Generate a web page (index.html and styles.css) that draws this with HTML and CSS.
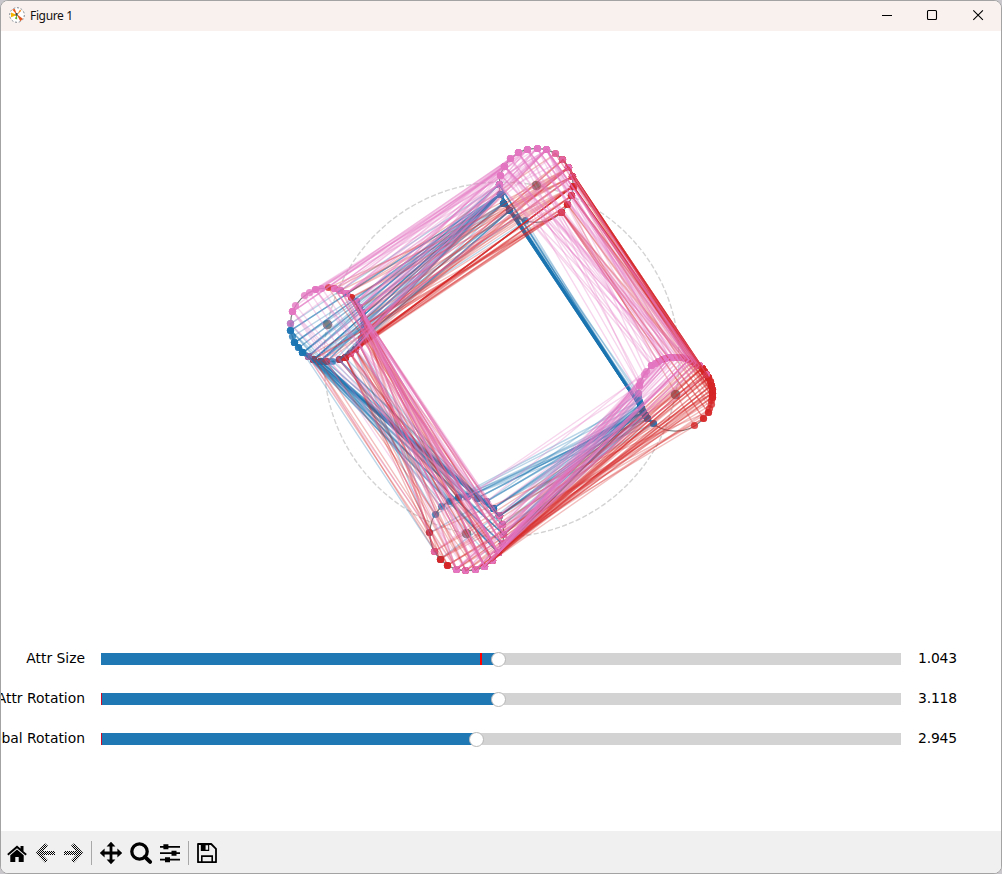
FILE: index.html
```html
<!DOCTYPE html>
<html lang="en">
<head>
<meta charset="utf-8">
<title>Figure 1</title>
<link rel="stylesheet" href="styles.css">
</head>
<body>
<div class="window">
  <header class="titlebar">
    <svg class="app-icon" width="16" height="16" viewBox="0 0 16 16">
      <circle cx="8" cy="8" r="7.3" fill="#fff" stroke="#7d8790" stroke-width="1" stroke-dasharray="2 1.8"/>
      <path d="M8 8 2 5.6v4.6z" fill="#f5b400"/>
      <path d="M8 8 3.2 2.6 5.9 1.9z" fill="#e8591c"/>
      <path d="M7.5 7l6.4 4.8-2.6 2.4z" fill="#e2571e"/>
      <path d="M8 8l3-5.5 1.3 1.2z" fill="#f08a24"/>
      <path d="M8 8l-2.2 3.6 2.4 1z" fill="#63b32e"/>
      <path d="M6.6 6h2v2.8h-2z" fill="#30444c"/>
    </svg>
    <span class="title">Figure 1</span>
    <div class="controls">
      <svg width="12" height="12" viewBox="0 0 12 12"><path d="M1 6.5h10"/></svg>
      <svg width="12" height="12" viewBox="0 0 12 12"><rect x="1.5" y="1.5" width="9" height="9" rx="1"/></svg>
      <svg width="12" height="12" viewBox="0 0 12 12"><path d="M1.3 1.3l9.6 9.6M10.9 1.3 1.3 10.9"/></svg>
    </div>
  </header>
  <main class="canvas">
    <svg class="plot" id="plot" width="1000" height="608" viewBox="1 31 1000 608"></svg>
    <section class="sliders">
      <div class="label">Attr Size</div>
      <div class="track"><i class="fill size"></i><i class="init at-size"></i><b class="handle size-pos"></b></div>
      <div class="value">1.043</div>
      <div class="label">Attr Rotation</div>
      <div class="track"><i class="fill attr"></i><i class="init"></i><b class="handle attr-pos"></b></div>
      <div class="value">3.118</div>
      <div class="label">Global Rotation</div>
      <div class="track"><i class="fill global"></i><i class="init"></i><b class="handle global-pos"></b></div>
      <div class="value">2.945</div>
    </section>
  </main>
  <footer class="toolbar">
    <svg class="tool home" width="22" height="24" viewBox="0 0 22 24">
      <path d="M1.2 13 11 4.6l3.5 3V5h3v5.2l3.3 2.8-1.2 1.5L11 7.2l-8.6 7.3z"/>
      <path d="M4.3 14.2 11 8.5l6.7 5.7v6.9h-5v-5.2H9.3v5.2h-5z"/>
    </svg>
    <svg class="tool back" width="22" height="24" viewBox="0 0 22 24">
      <defs><pattern id="dither" width="2" height="2" patternUnits="userSpaceOnUse"><path d="M0 0h1v1H0zM1 1h1v1H1z" fill="#000" shape-rendering="crispEdges"/></pattern></defs>
      <path class="arrow" d="M11.5 3.5 3.5 12l8 8.5M4 12h16"/>
    </svg>
    <svg class="tool forward" width="22" height="24" viewBox="0 0 22 24">
      <path class="arrow" d="M9.5 3.5l8 8.5-8 8.5M17 12H1"/>
    </svg>
    <span class="divider"></span>
    <svg class="tool pan" width="24" height="24" viewBox="0 0 24 24">
      <path d="M12 .8l4.4 4.8h-3v5h5v-3l4.8 4.4-4.8 4.4v-3h-5v5h3L12 23.2l-4.4-4.8h3v-5h-5v3L.8 12l4.8-4.4v3h5v-5h-3z"/>
    </svg>
    <svg class="tool zoom" width="24" height="24" viewBox="0 0 24 24">
      <circle cx="10.5" cy="10.5" r="7.7" fill="none" stroke="#000" stroke-width="3.3"/>
      <path d="M15.9 15.9l5.2 5" fill="none" stroke="#000" stroke-width="4" stroke-linecap="round"/>
    </svg>
    <svg class="tool config" width="22" height="24" viewBox="0 0 22 24">
      <path d="M1 5h20v1.7H1zM1 11.3h20V13H1zM1 17.8h20v1.7H1zM4.4 3.2h5v5h-5zM12.5 9.7h5v5h-5zM6 16.2h5v5H6z"/>
    </svg>
    <span class="divider second"></span>
    <svg class="tool save" width="22" height="24" viewBox="0 0 22 24">
      <path d="M2 3h13.2L20 7.8v13.4H2z" fill="none" stroke="#000" stroke-width="1.8" stroke-linejoin="round"/>
      <path d="M4.8 3h8.4v7H4.8zM5 21v-6.8h12V21h-1.6v-5.1H6.6V21z"/>
      <path d="M9.6 4.2h2.5v4.6H9.6z" fill="#f0f0f0"/>
    </svg>
  </footer>
</div>
<script src="plot.js"></script>
</body>
</html>
```

FILE: styles.css
```css
* { box-sizing: border-box; }
body { margin: 0; background: #c9c7cb; }
.window {
  width: 1002px; height: 874px;
  display: flex; flex-direction: column;
  overflow: hidden;
  background: #fff;
  border: 1px solid #a3a3a3;
  border-radius: 8px;
}
.titlebar {
  height: 30px; flex: none;
  display: flex; align-items: center;
  padding: 0 17px 0 8px;
  background: #f9f1ee;
}
.app-icon { margin-top: -2px; }
.title {
  margin-left: 5px;
  font: 12px/16px "Noto Sans", "Open Sans", sans-serif;
  letter-spacing: -0.35px;
  color: #111;
}
.controls { margin-left: auto; display: flex; gap: 34px; margin-top: -2px; }
.controls svg { fill: none; stroke: #000; stroke-width: 1.1; }
.controls svg:first-child { margin-right: -1px; }
.canvas { height: 800px; flex: none; display: flex; flex-direction: column; }
.plot { display: block; flex: none; }
.sliders {
  display: grid;
  grid-template-columns: 84px 800px 60px;
  grid-auto-rows: 40px;
  column-gap: 16px;
  align-items: center;
  font: 13.89px/20px "DejaVu Sans", sans-serif;
  color: #000;
}
.label { display: flex; justify-content: flex-end; white-space: nowrap; margin-top: -3px; }
.value { margin: -3px 0 0 1px; letter-spacing: -0.15px; }
.track { position: relative; height: 12px; background: #d3d3d3; }
.fill { position: absolute; left: 0; top: 0; height: 12px; background: #1f77b4; }
.fill.size, .fill.attr { width: 397px; }
.fill.global { width: 375px; }
.init { position: absolute; left: 0; top: 0; width: 1px; height: 12px; background: #d0102a; }
.init.at-size { left: 379px; width: 1.5px; background: #f00; }
.handle {
  position: absolute; top: -1px;
  width: 15px; height: 15px; margin-left: -7.5px;
  border: 1px solid #b8b8b8; border-radius: 50%;
  background: #fff;
}
.size-pos, .attr-pos { left: 397.2px; }
.global-pos { left: 375.2px; }
.toolbar {
  flex: 1;
  display: flex; align-items: center;
  padding: 1px 0 0 5px;
  background: #f0f0f0;
}
.tool { flex: none; fill: #000; }
.tool .arrow { fill: none; stroke: url(#dither); stroke-width: 4; }
.back { margin-left: 7px; }
.forward { margin-left: 6px; }
.divider { width: 1px; height: 24px; margin: 0 7px 0 6px; background: #a8a8a8; }
.divider.second { margin: 0 7px; }
.zoom { margin-left: 6px; }
.config { margin-left: 6px; }
```

FILE: plot.js
```js
// Rows are sepal length, sepal width, petal length, petal width in tenths (two digits each).
const classes = [
  ["#1f77b4", "51351402 49301402 47321302 46311502 50361402 54391704 46341403 50341502 44291402 49311501 54371502 48341602 48301401 43301101 58401202 57441504 54391304 51351403 57381703 51381503 54341702 51371504 46361002 51331705 48341902 50301602 50341604 52351502 52341402 47321602 48311602 54341504 52411501 55421402 49311502 50321202 55351302 49361401 44301302 51341502 50351303 45231303 44321302 50351606 51381904 48301403 51381602 46321402 53371502 50331402"],
  ["#d62728", "70324714 64324515 69314915 55234013 65284615 57284513 63334716 49243310 66294613 52273914 50203510 59304215 60224010 61294714 56293613 67314414 56304515 58274110 62224515 56253911 59324818 61284013 63254915 61284712 64294313 66304414 68284814 67305017 60294515 57263510 55243811 55243710 58273912 60275116 54304515 60344516 67314715 63234413 56304113 55254013 55264412 61304614 58264012 50233310 56274213 57304212 57294213 62294313 51253011 57284113"],
  ["#e377c2", "63336025 58275119 71305921 63295618 65305822 76306621 49254517 73296318 67255818 72366125 65325120 64275319 68305521 57255020 58285124 64325323 65305518 77386722 77266923 60225015 69325723 56284920 77286720 63274918 67335721 72326018 62284818 61304918 64285621 72305816 74286119 79386420 64285622 63285115 61265614 77306123 63345624 64315518 60304818 69315421 67315624 69315123 58275119 68325923 67335725 67305223 63255019 65305220 62345423 59305118"]
];

const NS = "http://www.w3.org/2000/svg";
const svg = document.getElementById("plot");
function add(tag, attrs) {
  const el = document.createElementNS(NS, tag);
  for (const k in attrs) el.setAttribute(k, attrs[k]);
  svg.appendChild(el);
}

const CX = 501.5, CY = 359.5, R = 177.5, r = 37;
const attrRotation = 3.118, globalRotation = 2.945;
const minimum = [43, 20, 10, 1], maximum = [79, 44, 69, 25];

const centers = [0, 1, 2, 3].map(i => {
  const a = globalRotation + i * Math.PI / 2;
  return [CX + R * Math.cos(a), CY - R * Math.sin(a)];
});
function place(value, i) {
  const a = attrRotation + 2 * Math.PI * (value - minimum[i]) / (maximum[i] - minimum[i]);
  return [centers[i][0] + r * Math.cos(a), centers[i][1] - r * Math.sin(a)];
}
// Markers sit on whole pixels so that they stay crisp.
const snap = n => Math.floor(n) + 0.5;

const samples = classes.flatMap(([color, rows]) => rows.split(" ").map(row => ({
  color,
  points: [0, 1, 2, 3].map(i => place(Number(row.slice(i * 2, i * 2 + 2)), i))
})));

add("circle", { cx: CX, cy: CY, r: R, fill: "none", stroke: "#d3d3d3", "stroke-width": 1.39, "stroke-dasharray": "5.14 2.22", transform: `matrix(1 0 0 -1 0 ${2 * CY})` });
for (const [x, y] of centers) {
  add("circle", { cx: x, cy: y, r, fill: "none", stroke: "#808080", "stroke-width": 1.2 });
  add("circle", { cx: snap(x), cy: snap(y), r: 4.8, fill: "#808080" });
}
for (const s of samples)
  for (const [x, y] of s.points) add("circle", { cx: snap(x), cy: snap(y), r: 3.6, fill: s.color, "fill-opacity": 0.8 });
for (const s of samples)
  add("polygon", { points: s.points.map(p => p.map(n => n.toFixed(2)).join()).join(" "), fill: "none", stroke: s.color, "stroke-width": 1.39, "stroke-opacity": 0.3 });
```
